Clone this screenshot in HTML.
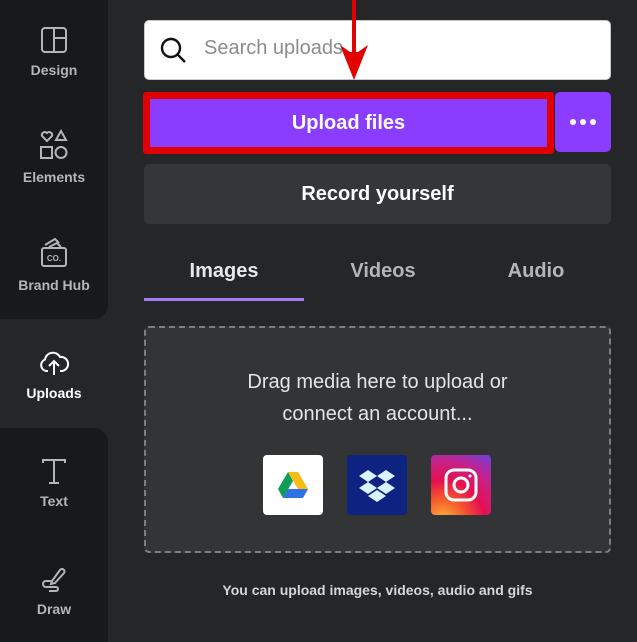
<!DOCTYPE html>
<html><head><style>
*{box-sizing:border-box;margin:0;padding:0}
body{width:637px;height:642px;overflow:hidden;background:#252627;font-family:"Liberation Sans",sans-serif;position:relative}
.side{position:absolute;left:0;width:108px;background:#18191b}
.nav{position:absolute;left:0;width:108px;text-align:center;color:#b4b5b7;font-size:14px;font-weight:bold}
.nav svg{display:block;margin:0 auto 8px}
.abs{position:absolute}
.dot{width:6px;height:6px;border-radius:3px;background:#fff}
</style></head><body>
<div class="side" style="top:0;height:319px;border-bottom-right-radius:14px"></div>
<div class="side" style="top:428px;height:214px;border-top-right-radius:14px"></div>

<div class="nav" style="top:26px"><svg width="28" height="28" viewBox="0 0 28 28" fill="none" stroke="#b4b5b7" stroke-width="2"><rect x="2" y="2" width="24" height="24" rx="3"/><path d="M14 2v24M14 12h12"/></svg>Design</div>
<div class="nav" style="top:129px"><svg width="32" height="32" viewBox="0 0 32 32" fill="none" stroke="#b4b5b7" stroke-width="2"><path d="M9 12l-5-5a3 3 0 0 1 5-3a3 3 0 0 1 5 3z"/><path d="M23 2l5 9h-10z"/><rect x="3" y="18" width="11" height="11"/><circle cx="23" cy="23.5" r="5.5"/></svg>Elements</div>
<div class="nav" style="top:237px"><svg width="30" height="32" viewBox="0 0 30 32" fill="none" stroke="#b4b5b7" stroke-width="2"><path d="M6 8l10-6 4 4M10 10l8-4 4 4"/><rect x="3" y="11" width="24" height="18" rx="2"/><text x="15" y="24" font-size="8" font-weight="bold" fill="#b4b5b7" stroke="none" text-anchor="middle" font-family="Liberation Sans">CO.</text></svg>Brand Hub</div>
<div class="nav" style="top:349px;color:#fff"><svg width="32" height="28" viewBox="0 0 32 28" fill="none" stroke="#fff" stroke-width="2"><path d="M10 22H8a6 6 0 0 1-1-11.5A8 8 0 0 1 22 8a6 6 0 0 1 2 14h-2"/><path d="M16 26V13M11 17l5-5 5 5"/></svg>Uploads</div>
<div class="nav" style="top:457px"><svg width="28" height="28" viewBox="0 0 28 28" fill="none" stroke="#b4b5b7" stroke-width="2"><path d="M3 6V3h22v3M14 3v23M9 26h10"/></svg>Text</div>
<div class="nav" style="top:565px"><svg width="28" height="28" viewBox="0 0 28 28" fill="none" stroke="#b4b5b7" stroke-width="2"><path d="M12 16l8-11a2.5 2.5 0 0 1 4 3l-9 10-4 1z"/><path d="M11 16H6a3 3 0 0 0 0 6h10a2 2 0 0 1 0 4H9"/></svg>Draw</div>

<div class="abs" style="left:144px;top:20px;width:467px;height:60px;background:#fff;border:1px solid #c9c9cc;border-radius:5px"></div>
<svg class="abs" style="left:159px;top:36px" width="30" height="30" viewBox="0 0 30 30" fill="none" stroke="#111" stroke-width="2.4"><circle cx="12" cy="12" r="9"/><path d="M19 19l7 7"/></svg>
<div class="abs" style="left:204px;top:37px;font-size:20px;color:#8c8c8f">Search uploads</div>

<div class="abs" style="left:555px;top:92px;width:56px;height:60px;background:#8b3dff;border-radius:5px;display:flex;align-items:center;justify-content:center;gap:4px"><div class="dot"></div><div class="dot"></div><div class="dot"></div></div>
<div class="abs" style="left:143px;top:92px;width:411px;height:62px;background:#8b3dff;border:7px solid #e00000;border-radius:3px;color:#fff;font-weight:bold;font-size:20px;text-align:center;line-height:48px">Upload files</div>

<svg class="abs" style="left:338px;top:0" width="32" height="82" viewBox="0 0 32 82"><path d="M14 0h4v52h2l10-7-14 35L2 45l10 7h2z" fill="#e20000"/></svg>

<div class="abs" style="left:144px;top:164px;width:467px;height:60px;background:#353638;border-radius:5px;color:#fff;font-weight:bold;font-size:20px;text-align:center;line-height:60px">Record yourself</div>

<div class="abs" style="left:144px;top:260px;width:160px;text-align:center;color:#e8e8ea;font-weight:bold;font-size:20px">Images</div>
<div class="abs" style="left:304px;top:260px;width:158px;text-align:center;color:#b4b5b7;font-weight:bold;font-size:20px">Videos</div>
<div class="abs" style="left:460px;top:260px;width:152px;text-align:center;color:#b4b5b7;font-weight:bold;font-size:20px">Audio</div>
<div class="abs" style="left:144px;top:298px;width:160px;height:3px;background:#a47cf3"></div>

<div class="abs" style="left:144px;top:326px;width:467px;height:227px;background:#333436;border:2.5px dashed #7d7e80;border-radius:5px"></div>
<div class="abs" style="left:144px;top:366px;width:467px;text-align:center;color:#e4e4e6;font-size:20px;line-height:32px">Drag media here to upload or<br>connect an account...</div>

<div class="abs" style="left:263px;top:455px;width:60px;height:60px;background:#fff;border-radius:4px"></div>
<svg class="abs" style="left:278px;top:472px" width="30" height="26" viewBox="0 0 30 26"><path d="M10 0h10l10 17h-10z" fill="#f9bc15"/><path d="M10 0l5 9-10 17L0 17z" fill="#0f9d58"/><path d="M5 26l5-9h20l-5 9z" fill="#2f72e6"/></svg>
<div class="abs" style="left:347px;top:455px;width:60px;height:60px;background:#0d2281;border-radius:4px"></div>
<svg class="abs" style="left:358px;top:470px" width="38" height="32" viewBox="0 0 38 32" fill="#d7f4ff"><path d="M10 0l9 6-9 6-9-6zM28 0l9 6-9 6-9-6zM10 12l9 6-9 6-9-6zM28 12l9 6-9 6-9-6zM19 20l9 6-9 6-9-6z"/></svg>
<div class="abs" style="left:431px;top:455px;width:60px;height:60px;border-radius:4px;background:radial-gradient(circle at 20% 110%,#fdb93a 0%,#f5582d 28%,#e5104f 50%,#c2248f 75%,#6b3fe0 100%)"></div>
<svg class="abs" style="left:443px;top:467px" width="36" height="36" viewBox="0 0 36 36" fill="none" stroke="#fff" stroke-width="3"><rect x="3" y="3" width="30" height="30" rx="8"/><circle cx="18" cy="18" r="7"/><circle cx="27" cy="9" r="1.5" fill="#fff" stroke="none"/></svg>

<div class="abs" style="left:144px;top:582px;width:467px;text-align:center;color:#d6d6d8;font-weight:bold;font-size:14px">You can upload images, videos, audio and gifs</div>
</body></html>
